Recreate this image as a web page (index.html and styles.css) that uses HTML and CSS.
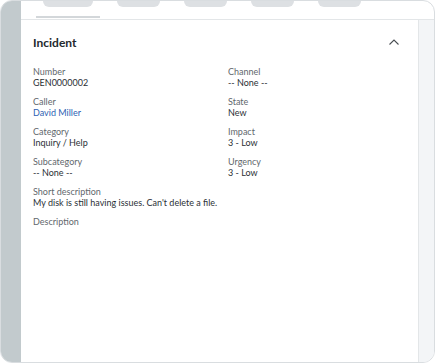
FILE: index.html
```html
<!DOCTYPE html>
<html lang="en">
<head>
  <meta charset="UTF-8">
  <title>Incident</title>
  <link rel="stylesheet" href="styles.css">
</head>
<body>
  <div class="frame">
    <div class="rail"></div>
    <div class="main">
      <div class="tabbar">
        <div class="tab active"><div class="pill"></div></div>
        <div class="tab"><div class="pill"></div></div>
        <div class="tab"><div class="pill"></div></div>
        <div class="tab"><div class="pill"></div></div>
        <div class="tab"><div class="pill"></div></div>
      </div>
      <div class="body">
        <div class="content">
          <div class="header">
            <h2>Incident</h2>
            <svg class="chevron" width="12" height="8" viewBox="0 0 12 8">
              <path d="M1.5 6.5 L6 2 L10.5 6.5" fill="none" stroke="#4a4f54" stroke-width="1.1"/>
            </svg>
          </div>
          <div class="fields">
            <div class="field"><div class="label">Number</div><div class="value">GEN0000002</div></div>
            <div class="field"><div class="label">Channel</div><div class="value">-- None --</div></div>
            <div class="field"><div class="label">Caller</div><div class="value link">David Miller</div></div>
            <div class="field"><div class="label">State</div><div class="value">New</div></div>
            <div class="field"><div class="label">Category</div><div class="value">Inquiry / Help</div></div>
            <div class="field"><div class="label">Impact</div><div class="value">3 - Low</div></div>
            <div class="field"><div class="label">Subcategory</div><div class="value">-- None --</div></div>
            <div class="field"><div class="label">Urgency</div><div class="value">3 - Low</div></div>
            <div class="field wide"><div class="label">Short description</div><div class="value">My disk is still having issues. Can't delete a file.</div></div>
            <div class="field wide"><div class="label">Description</div></div>
          </div>
        </div>
        <div class="side"></div>
      </div>
    </div>
  </div>
</body>
</html>
```

FILE: styles.css
```css
html, body {
  margin: 0;
  background: #ffffff;
}
body {
  font-family: 'Lato', 'Liberation Sans', sans-serif;
}
.frame {
  width: 433px;
  height: 361px;
  border: 1px solid #d9dde0;
  border-radius: 12px;
  overflow: hidden;
  display: flex;
  background: #ffffff;
}
.rail {
  width: 20px;
  background: #c2cacd;
}
.main {
  flex: 1;
  display: flex;
  flex-direction: column;
}
.tabbar {
  height: 18px;
  border-bottom: 1px solid #e3e6e8;
  display: flex;
  gap: 24px;
  padding-left: 15px;
}
.tab {
  display: flex;
  flex-direction: column;
  align-items: center;
  justify-content: space-between;
  margin-top: -1px;
}
.pill {
  width: 43px;
  height: 7px;
  background: #dde0e3;
  border-radius: 0 0 6px 6px;
}
.tab.active {
  width: 64px;
  margin-right: -7px;
}
.tab.active .pill {
  width: 50px;
}
.tab.active::after {
  content: '';
  width: 64px;
  height: 2px;
  background: #d3d7da;
  margin-bottom: 1px;
}
.body {
  flex: 1;
  display: flex;
}
.content {
  flex: 1;
  padding: 13px 18px 0 12px;
}
.side {
  width: 15px;
  background: #f3f5f7;
  border-left: 1px solid #e3e6e8;
}
.header {
  display: flex;
  justify-content: space-between;
  align-items: center;
  height: 18px;
}
.header h2 {
  margin: 0;
  font-size: 12px;
  font-weight: 700;
  color: #24292e;
}
.fields {
  margin-top: 15px;
  display: grid;
  grid-template-columns: 195px 1fr;
  row-gap: 8px;
}
.field.wide {
  grid-column: 1 / 3;
}
.label, .value {
  font-size: 9px;
  line-height: 11px;
}
.label {
  color: #62686d;
}
.value {
  color: #2b3035;
}
.value.link {
  color: #2d5fb3;
}
```
